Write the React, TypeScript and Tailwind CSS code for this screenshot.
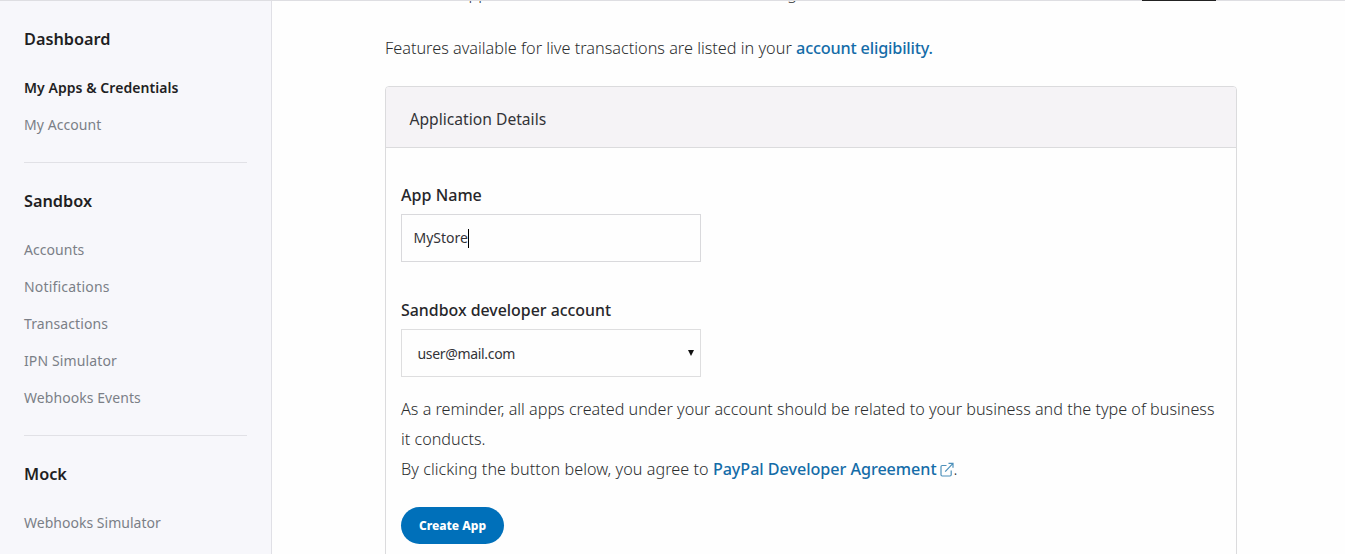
type NavItem = { label: string; tracking?: string; active?: boolean };
type NavSection = { title: string; items: NavItem[] };

const sections: NavSection[] = [
  {
    title: "Dashboard",
    items: [
      { label: "My Apps & Credentials", tracking: "tracking-[0.05px]", active: true },
      { label: "My Account", tracking: "tracking-[0.06px]" },
    ],
  },
  {
    title: "Sandbox",
    items: [
      { label: "Accounts", tracking: "tracking-[0.05px]" },
      { label: "Notifications", tracking: "tracking-[0.18px]" },
      { label: "Transactions", tracking: "tracking-[0.1px]" },
      { label: "IPN Simulator", tracking: "tracking-[0.12px]" },
      { label: "Webhooks Events", tracking: "tracking-[0.06px]" },
    ],
  },
  { title: "Mock", items: [{ label: "Webhooks Simulator", tracking: "tracking-[0.02px]" }] },
];

function Sidebar() {
  return (
    <aside className="w-[272px] shrink-0 overflow-hidden border-r border-[#e0e0e6] bg-[#f7f7fb] px-6">
      {sections.map((section, index) => (
        <section
          key={section.title}
          className={index === 0 ? "pt-[27px]" : "border-t border-[#e1e1e6] pt-[26px]"}
        >
          <h2 className="text-[16.3px] font-semibold leading-6 text-[#1f1f23]">{section.title}</h2>
          <ul className="pb-[19px] pt-[18px]">
            {section.items.map((item) => (
              <li
                key={item.label}
                className={`whitespace-nowrap text-[14px] leading-[37px] ${item.tracking ?? ""} ${
                  item.active ? "font-semibold text-[#1f1f23]" : "text-[#7b7f87]"
                }`}
              >
                {item.label}
              </li>
            ))}
          </ul>
        </section>
      ))}
    </aside>
  );
}

function ExternalIcon() {
  return (
    <svg
      className="ml-[3px] inline-block h-[15px] w-[14px] align-[-2px]"
      viewBox="0 0 14 15"
      fill="none"
      stroke="#4d90ba"
      strokeWidth="1.2"
    >
      <path d="M6.5 3.5H2.2Q1 3.5 1 4.700V12.800Q1 14 2.200 14H10Q11.200 14 11.200 12.800V8.500" />
      <path d="M8.500 1.300H13V5.800M13 1.300L5.200 9.600" />
    </svg>
  );
}

function Card() {
  return (
    <div className="mt-[23px] h-[520px] w-[852px] rounded-t-[4px] border border-[#dbdbdd]">
      <div className="h-[61px] rounded-t-[3px] border-b border-[#dbdbdd] bg-[#f5f3f6] pl-[23.5px] pt-[2px] text-[15.65px] leading-[60px] text-[#333338]">
        Application Details
      </div>
      <div className="px-[15px] pt-[35px]">
        <div className="text-[16.1px] font-medium leading-6 text-[#26262a]">App Name</div>
        <div className="mt-[7px] flex h-12 w-[300px] items-center border border-[#d9d9dc] bg-[#fefefe] pl-[11.5px] text-[14px] text-[#333338]">
          <span className="pb-[2px]">MyStore</span>
          <span className="h-[19px] w-px bg-black" />
        </div>
        <div className="mt-9 text-[15.9px] font-medium leading-6 text-[#26262a]">Sandbox developer account</div>
        <div className="mt-[7px] flex h-12 w-[300px] items-center justify-between border border-[#dededf] bg-[#fefefe] pl-[15.5px] pr-[6px] text-[14px] tracking-[-0.33px] text-[#333338]">
          <span className="pt-px">user@mail.com</span>
          <svg className="h-[6px] w-[6px]" viewBox="0 0 6 6">
            <path d="M0 0H6L3 6Z" fill="#111" />
          </svg>
        </div>
        <p className="mt-[17px] whitespace-nowrap text-[16.17px] font-light leading-[30px] tracking-[0.01px] text-[#2c2e2f]">
          As a reminder, all apps created under your account should be related to your business and the type of business
          <br />
          it conducts.
          <br />
          <span className="tracking-[0.06px]">By clicking the button below, you agree to </span>
          <a className="font-medium tracking-[-0.05px] text-[#146ca8]">PayPal Developer Agreement</a>
          <ExternalIcon />.
        </p>
        <button className="mt-[23px] block h-[37px] w-[103px] rounded-full bg-[#0070ba] text-[12px] font-extrabold text-white">
          Create App
        </button>
      </div>
    </div>
  );
}

export default function App() {
  return (
    <div className="relative flex h-[554px] w-[1345px] overflow-hidden bg-[#fefefe] font-['Noto_Sans',sans-serif]">
      <Sidebar />
      <main className="flex h-[554px] flex-1 flex-col overflow-hidden pl-[113px]">
        <div className="h-[33px] shrink-0">
          <p className="-mt-[22px] whitespace-nowrap text-[16.2px] font-light leading-[30px] text-[#2c2e2f]">
            Create an app to receive REST API credentials for testing and live transactions.
          </p>
        </div>
        <p className="h-[30px] shrink-0 whitespace-nowrap text-[16.25px] font-light leading-[30px] text-[#2c2e2f]">
          Features available for live transactions are listed in your{" "}
          <a className="font-medium tracking-[-0.18px] text-[#146ca8]">account eligibility.</a>
        </p>
        <div className="shrink-0">
          <Card />
        </div>
      </main>
      <div className="absolute inset-x-0 top-0 flex h-px bg-[#dedee2]">
        <div className="ml-[1142px] h-px w-[74px] bg-[#222]" />
      </div>
    </div>
  );
}
